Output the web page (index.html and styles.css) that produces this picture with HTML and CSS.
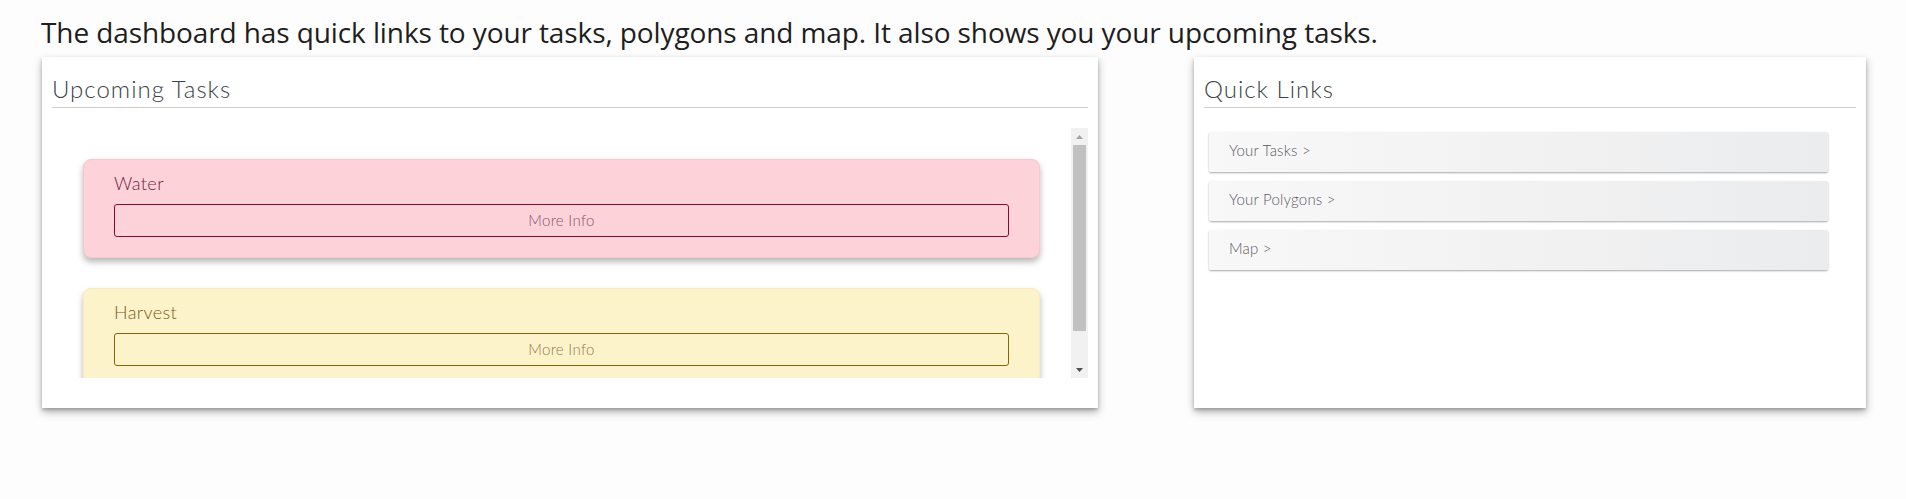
FILE: index.html
```html
<!DOCTYPE html>
<html lang="en">
<head>
<meta charset="utf-8">
<title>Dashboard</title>
<link rel="stylesheet" href="styles.css">
</head>
<body>
<div class="page">
  <p class="intro">The dashboard has quick links to your tasks, polygons and map. It also shows you your upcoming tasks.</p>
  <div class="panels">
    <section class="panel">
      <h2 class="panel-title">Upcoming Tasks</h2>
      <div class="task-area">
        <div class="task-scroll">
          <div class="task task-danger">
            <div class="task-name">Water</div>
            <div class="task-btn">More Info</div>
          </div>
          <div class="task task-warning">
            <div class="task-name">Harvest</div>
            <div class="task-btn">More Info</div>
          </div>
        </div>
        <div class="scrollbar" aria-hidden="true">
          <div class="sb-btn">
            <svg width="7" height="4" viewBox="0 0 7 4"><path d="M0 4L3.5 0L7 4Z" fill="#a3a3a3"/></svg>
          </div>
          <div class="sb-track">
            <div class="sb-thumb"></div>
          </div>
          <div class="sb-btn">
            <svg width="7" height="4" viewBox="0 0 7 4"><path d="M0 0L3.5 4L7 0Z" fill="#505050"/></svg>
          </div>
        </div>
      </div>
    </section>
    <section class="panel">
      <h2 class="panel-title">Quick Links</h2>
      <nav class="links">
        <a class="link">Your Tasks &gt;</a>
        <a class="link">Your Polygons &gt;</a>
        <a class="link">Map &gt;</a>
      </nav>
    </section>
  </div>
</div>
</body>
</html>
```
FILE: styles.css
```css
html, body {
  margin: 0;
  padding: 0;
  background: #fdfdfd;
}

.page {
  padding: 14px 40px 30px 42px;
}

.intro {
  margin: 0 0 6px -1px;
  font-family: "Open Sans", "Noto Sans", sans-serif;
  font-size: 28px;
  line-height: 37px;
  letter-spacing: -0.1px;
  color: #1e1e1e;
}

.panels {
  display: grid;
  grid-template-columns: 1056px 672px;
  column-gap: 96px;
  align-items: start;
}

.panel {
  background: #fff;
  height: 351px;
  box-sizing: border-box;
  padding: 10px;
  box-shadow: 0 4px 8px rgba(0, 0, 0, 0.3), 0 2px 3px rgba(0, 0, 0, 0.18);
}

.panel-title {
  margin: 0;
  padding: 7px 0 4px;
  border-bottom: 1px solid #cfcfcf;
  font-family: Lato, sans-serif;
  font-weight: 300;
  font-size: 24px;
  line-height: 29px;
  letter-spacing: 1px;
  color: #3a3f48;
}

.task-area {
  margin-top: 20px;
  height: 250px;
  display: flex;
}

.task-scroll {
  flex: 1;
  overflow: hidden;
  padding: 31px 31px 0;
  display: flex;
  flex-direction: column;
  gap: 30px;
}

.scrollbar {
  flex: none;
  width: 17px;
  background: #f1f1f1;
  display: flex;
  flex-direction: column;
}

.sb-btn {
  flex: none;
  height: 17px;
  display: flex;
  align-items: center;
  justify-content: center;
}

.sb-track {
  flex: 1;
  padding: 0 2px;
}

.sb-thumb {
  height: 186px;
  background: #c1c1c1;
}

.task {
  flex: none;
  border-radius: 8px;
  padding: 12px 30px 20px;
  box-shadow: 0 4px 6px rgba(0, 0, 0, 0.28);
  font-family: Lato, sans-serif;
  font-weight: 300;
}

.task-danger {
  background: #fdd2d8;
  border: 1px solid #f8c6cd;
}

.task-warning {
  background: #fdf3cb;
  border: 1px solid #f9ebbb;
}

.task-name {
  font-size: 18px;
  line-height: 22px;
  margin-bottom: 10px;
  letter-spacing: 0.4px;
}

.task-danger .task-name {
  color: #6e2446;
}

.task-warning .task-name {
  color: #7a5a14;
}

.task-btn {
  border: 1px solid;
  border-radius: 3px;
  text-align: center;
  font-size: 15px;
  line-height: 31px;
  letter-spacing: 0.3px;
}

.task-danger .task-btn {
  border-color: #8b0a2c;
  color: #82576f;
}

.task-warning .task-btn {
  border-color: #8a6400;
  color: #8e7a48;
}

.links {
  margin-top: 24px;
  padding: 0 28px 0 5px;
  display: flex;
  flex-direction: column;
  gap: 9px;
}

.link {
  display: block;
  height: 40px;
  box-sizing: border-box;
  padding: 0 20px;
  line-height: 37px;
  border-radius: 2px;
  background: linear-gradient(90deg, #f9f8f9, #ebeced);
  box-shadow: 0 1px 2px rgba(0, 0, 0, 0.35);
  font-family: Lato, sans-serif;
  font-weight: 300;
  font-size: 15px;
  letter-spacing: 0.2px;
  color: #5a5a62;
}
```
